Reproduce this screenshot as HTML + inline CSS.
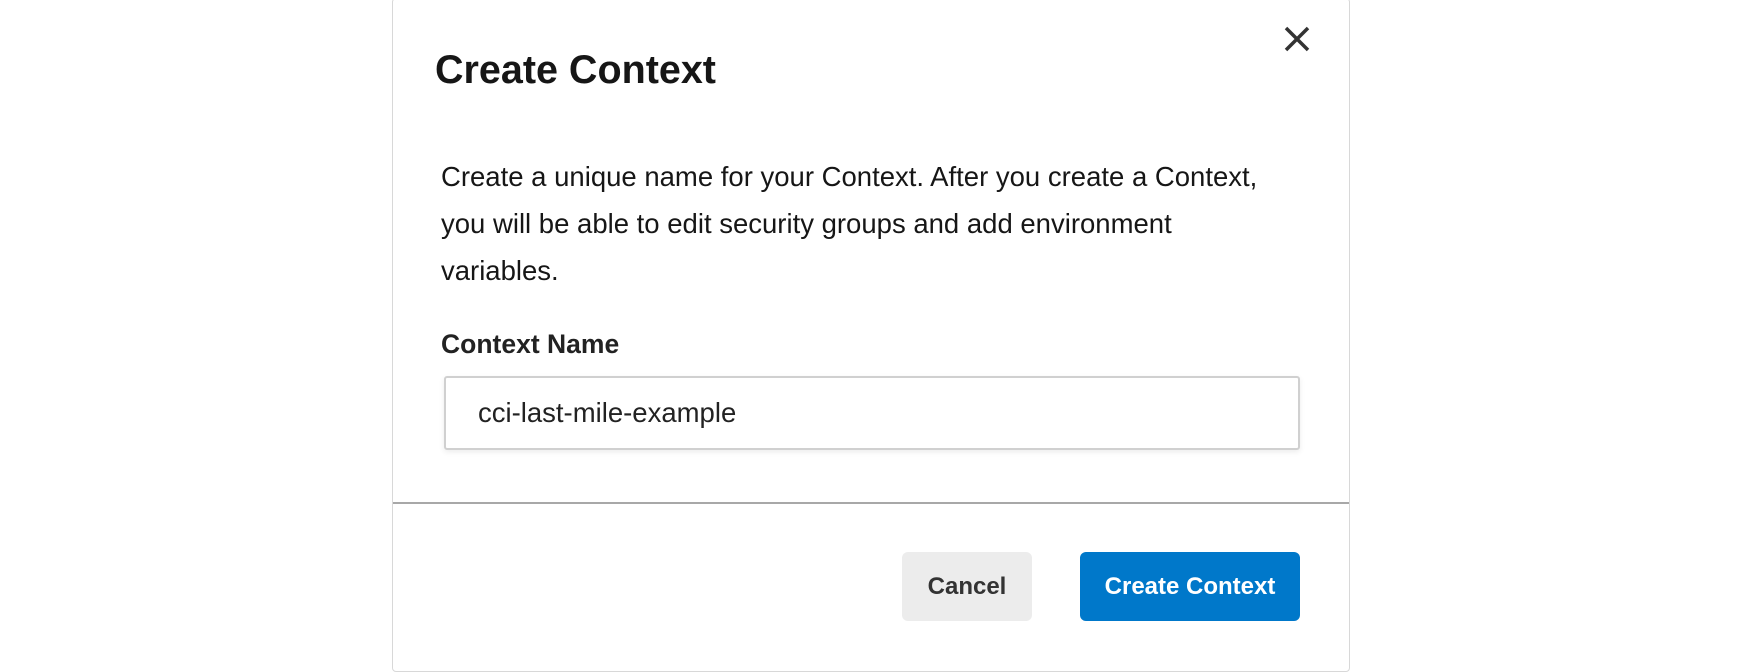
<!DOCTYPE html>
<html><head><style>
body{margin:0;width:1748px;height:671px;background:#fff;font-family:"Liberation Sans",Arial,sans-serif;position:relative;overflow:hidden;color:#161616}
.modal{position:absolute;left:392px;top:-2px;width:956px;height:672px;border:1px solid #d8d8d8;border-radius:4px;background:#fff}
.t{position:absolute;left:435px;top:48px;font-size:39.5px;font-weight:bold;color:#161616}
.p{position:absolute;left:441px;top:153px;font-size:27.5px;line-height:47px;color:#161616;width:900px;white-space:nowrap}
.l{position:absolute;left:441px;top:329px;font-size:26.5px;font-weight:bold;color:#222}
.in{position:absolute;left:444px;top:376px;width:856px;height:74px;border:2px solid #d0d0d0;border-radius:3px;box-shadow:0 2px 6px rgba(0,0,0,.08);box-sizing:border-box}
.in span{position:absolute;left:32px;top:19px;font-size:27.5px;color:#222}
.hr{position:absolute;left:393px;top:502px;width:956px;height:2px;background:#a8a8a8}
.b{position:absolute;top:552px;height:69px;border-radius:6px;font-size:24px;display:flex;align-items:center;justify-content:center;font-weight:bold}
.c{left:902px;width:130px;background:#ececec;color:#333}
.k{left:1080px;width:220px;background:#0078ca;color:#fff}
</style></head><body>
<div class="modal"></div>
<div class="t">Create Context</div>
<svg style="position:absolute;left:1284px;top:26px" width="26" height="26" viewBox="0 0 26 26"><path d="M2 2L24 24M24 2L2 24" stroke="#333" stroke-width="3.5"/></svg>
<div class="p">Create a unique name for your Context. After you create a Context,<br>you will be able to edit security groups and add environment<br>variables.</div>
<div class="l">Context Name</div>
<div class="in"><span>cci-last-mile-example</span></div>
<div class="hr"></div>
<div class="b c">Cancel</div>
<div class="b k">Create Context</div>
</body></html>
